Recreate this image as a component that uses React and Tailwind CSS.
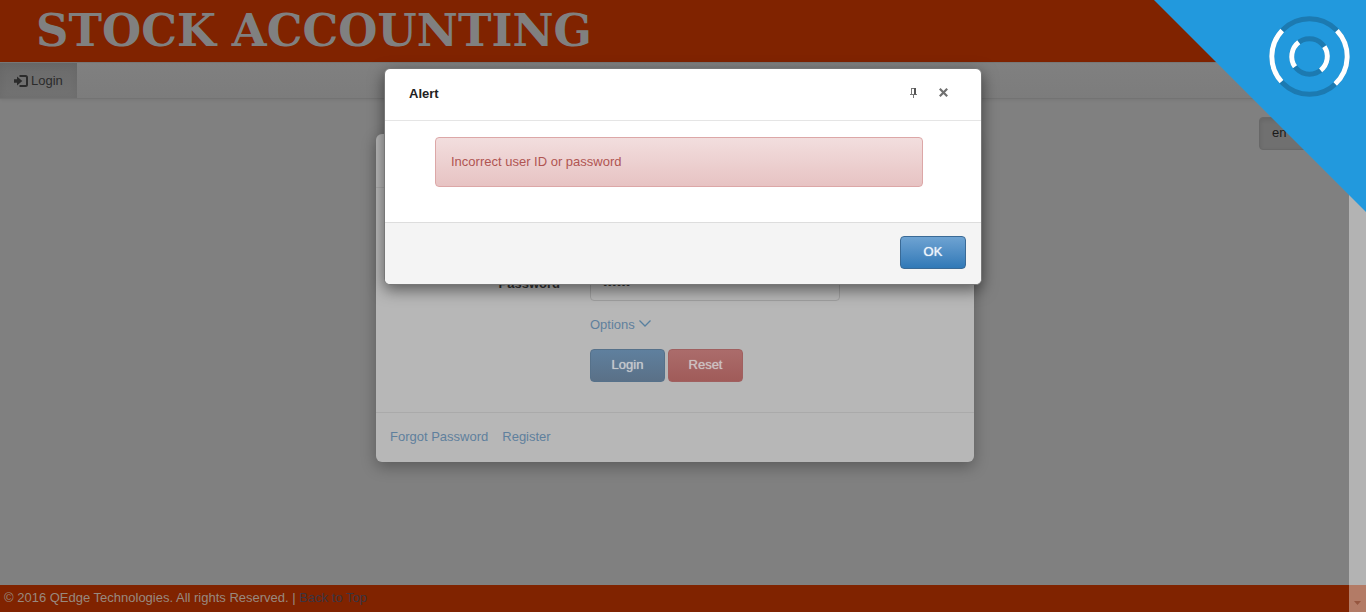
import React from 'react';

function LoginIcon() {
  return (
    <svg className="h-3 w-[14px]" viewBox="0 0 14 12" aria-hidden="true">
      <path d="M0 4.200h3V1.600L8.300 6 3 10.400V7.800H0z" fill="#2b2b2b" />
      <path d="M5.500 1H11.500a1.500 1.500 0 0 1 1.500 1.500v7a1.500 1.500 0 0 1-1.500 1.500H5.500" fill="none" stroke="#2b2b2b" strokeWidth="2" />
    </svg>
  );
}

function PinIcon() {
  return (
    <svg className="h-[10px] w-[7px]" viewBox="0 0 7 10" fill="none" stroke="#777" aria-hidden="true">
      <path d="M1 .5h5M1.500 .5v6M0 6.500h7M3.500 7v3" />
      <path d="M5 0v6.500" stroke="#555" strokeWidth="2" />
    </svg>
  );
}

function CloseIcon() {
  return (
    <svg className="h-[9px] w-[9px]" viewBox="0 0 9 9" stroke="#707070" strokeWidth="2.2" aria-hidden="true">
      <path d="M.8.8l7.400 7.400M8.200.8L.8 8.200" />
    </svg>
  );
}

function LoadingCorner() {
  return (
    <svg className="pointer-events-none absolute top-0 right-0 z-30 h-[212px] w-[212px]" viewBox="0 0 212 212" fill="none" role="img" aria-label="Loading">
      <path d="M0 0H212V212Z" fill="#2299dd" />
      <g strokeWidth="5">
        <circle cx="155.5" cy="56.5" r="37.7" stroke="#1c7ab1" />
        <circle cx="155.5" cy="56.5" r="17.8" stroke="#1c7ab1" />
        <path d="M128.200 30.500A37.700 37.700 0 0 0 127.500 81.700M182.900 30.600A37.700 37.700 0 0 1 181.200 84" stroke="#fff" />
        <path d="M144.800 42.300A17.800 17.800 0 0 0 141 66.800M170.300 46.600A17.800 17.800 0 0 1 166.600 70.400" stroke="#fff" />
      </g>
    </svg>
  );
}

function AlertDialog() {
  return (
    <div className="absolute inset-0 z-20 flex items-start justify-center pt-[68px]">
      <section role="alertdialog" aria-labelledby="alert-title" aria-describedby="alert-text" className="w-full max-w-[598px] overflow-hidden rounded-md border border-[#777] bg-white shadow-[0_5px_15px_rgba(0,0,0,0.5)]">
        <header className="flex h-[52px] items-center justify-between border-b border-[#e5e5e5] pr-[33px] pb-0.5 pl-6">
          <h2 id="alert-title" className="text-[13px] font-bold text-[#222]">Alert</h2>
          <div className="flex items-center gap-[22px] pb-0.5">
            <button type="button" aria-label="Pin"><PinIcon /></button>
            <button type="button" aria-label="Close"><CloseIcon /></button>
          </div>
        </header>
        <div className="h-[101px] pt-4 pr-[58px] pl-[50px]">
          <p id="alert-text" className="flex h-[50px] items-center rounded border border-[#dca7a7] bg-linear-to-b from-[#f2dede] to-[#e7c3c3] px-[15px] text-[#b05552]">
            Incorrect user ID or password
          </p>
        </div>
        <footer className="flex h-[62px] items-center justify-end border-t border-[#ddd] bg-[#f4f4f4] px-[15px] pb-0.5">
          <button type="button" className="h-[33px] w-[66px] rounded border border-[#3a6a96] bg-linear-to-b from-[#6ea3d2] to-[#3079b7] pb-0.5 text-[#eef4fa] text-shadow-[0_0_1px_#eef4fa]">OK</button>
        </footer>
      </section>
    </div>
  );
}

function Field({ id, label, ...props }) {
  return (
    <div className="flex items-center gap-[30px]">
      <label htmlFor={id} className="w-[184px] text-right font-bold text-[#333]">{label}</label>
      <input id={id} {...props} className="h-[34px] w-[250px] rounded border border-[#a0a0a0] bg-transparent px-3 text-[#333]" />
    </div>
  );
}

function LoginCard() {
  return (
    <form className="col-start-1 row-start-1 mt-[35px] w-full max-w-[598px] self-start justify-self-center rounded-md bg-[#b7b7b7] shadow-[0_5px_15px_rgba(0,0,0,0.3)]">
      <h2 className="flex h-[54px] items-center border-b border-[#aaa] px-6 font-bold text-[#333]">Login</h2>
      <div className="flex h-56 flex-col pt-[30px]">
        <div className="flex flex-col gap-[15px]">
          <Field id="username" label="User Name" type="text" />
          <Field id="password" label="Password" type="password" defaultValue="master" />
        </div>
        <div className="flex flex-col items-start gap-[15px] pt-[15px] pl-[214px]">
          <a href="#options" className="flex items-center gap-1 leading-[18px] text-[#5f809d]">
            Options
            <svg className="mb-1 h-[7px] w-3" viewBox="0 0 12 7" fill="none" stroke="#58809f" strokeWidth="1.3" aria-hidden="true"><path d="M.5.5 6 6l5.500-5.500" /></svg>
          </a>
          <div className="flex gap-[3px]">
            <button type="button" className="h-[33px] w-[75px] rounded border border-[#56718a] bg-linear-to-b from-[#5f809e] to-[#5a7087] pb-0.5 text-[#c4c8cc] text-shadow-[0_0_1px_#c4c8cc]">Login</button>
            <button type="reset" className="h-[33px] w-[75px] rounded border border-[#a06060] bg-linear-to-b from-[#ab6c6b] to-[#a05b59] pb-0.5 text-[#ccc0c0] text-shadow-[0_0_1px_#ccc0c0]">Reset</button>
          </div>
        </div>
      </div>
      <footer className="flex h-[50px] items-center gap-[14px] border-t border-[#aaa] px-[14px] pb-0.5 text-[#5f809d]">
        <a href="#forgot">Forgot Password</a>
        <a href="#register">Register</a>
      </footer>
    </form>
  );
}

export default function App() {
  return (
    <div className="relative flex min-h-screen flex-col overflow-hidden bg-[#808080] font-['Liberation_Sans',Arial,sans-serif] text-[13px] leading-[18px]">
      <header className="flex h-[62px] items-center bg-[#802300] px-9">
        <h1 className="font-['DejaVu_Serif',serif] text-[45px] leading-[60px] font-bold whitespace-nowrap text-[#808080]">STOCK ACCOUNTING</h1>
      </header>
      <nav className="flex h-[37px] border-y border-t-[#777] border-b-[#737373] bg-linear-to-b from-[#808080] to-[#7c7c7c] shadow-[0_1px_3px_rgba(0,0,0,0.08)]">
        <a href="#login" className="flex items-center gap-[3px] bg-linear-to-b from-[#6b6b6b] to-[#727272] px-[14px] text-[#2b2b2b] shadow-[inset_0_2px_8px_rgba(0,0,0,0.06)]">
          <LoginIcon />
          Login
        </a>
      </nav>
      <main className="grid flex-1 grid-cols-1 pr-4">
        <select aria-label="Language" defaultValue="en" className="col-start-1 row-start-1 mt-[18px] mr-[14px] h-[33px] w-[77px] appearance-none justify-self-end rounded border border-[#686868] bg-[#707070] px-3 pb-0.5 text-[#1a1a1a] shadow-[inset_0_2px_4px_rgba(0,0,0,0.1)]">
          <option value="en">en</option>
        </select>
        <LoginCard />
      </main>
      <footer className="h-[27px] bg-[#802300] px-1 pt-1 text-[#98897f]">
        © 2016 QEdge Technologies. All rights Reserved. | <a href="#top" className="text-[#3a3542]">Back to Top</a>
      </footer>
      <AlertDialog />
      <div className="pointer-events-none absolute inset-y-0 right-0 z-20 flex w-[17px] items-end justify-center bg-white/40 pb-[7px]">
        <svg className="h-1 w-[7px]" viewBox="0 0 7 4" aria-hidden="true"><path d="M0 0h7L3.500 4z" fill="#96563f" /></svg>
      </div>
      <LoadingCorner />
    </div>
  );
}
